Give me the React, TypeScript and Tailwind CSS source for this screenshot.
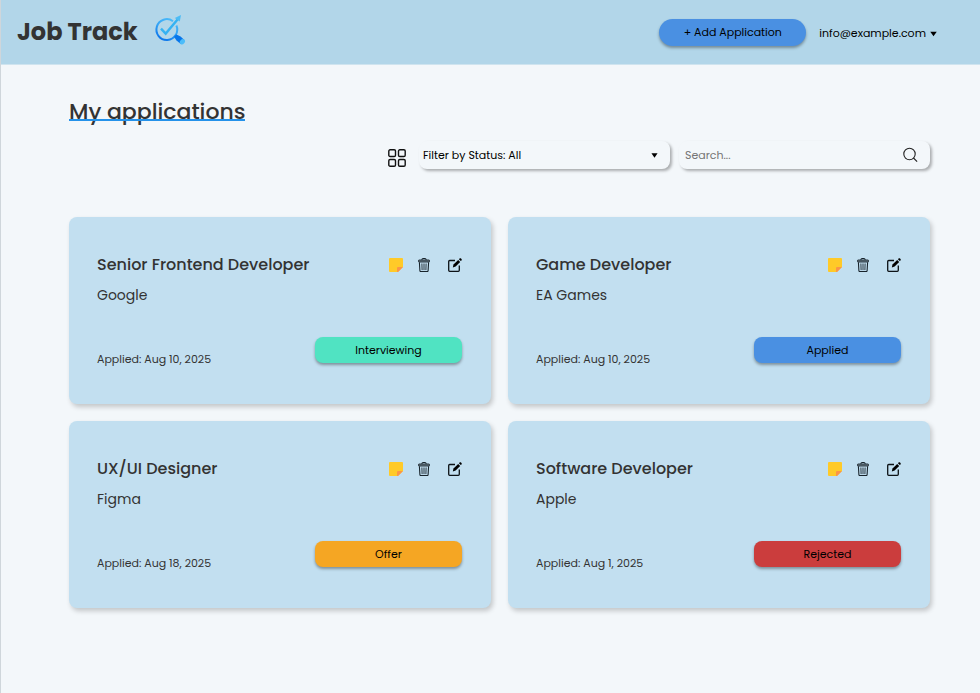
import React, { useState } from "react";

type Status = "Interviewing" | "Applied" | "Offer" | "Rejected";

interface Application {
  title: string;
  company: string;
  date: string;
  status: Status;
}

const applications: Application[] = [
  { title: "Senior Frontend Developer", company: "Google", date: "Aug 10, 2025", status: "Interviewing" },
  { title: "Game Developer", company: "EA Games", date: "Aug 10, 2025", status: "Applied" },
  { title: "UX/UI Designer", company: "Figma", date: "Aug 18, 2025", status: "Offer" },
  { title: "Software Developer", company: "Apple", date: "Aug 1, 2025", status: "Rejected" },
];

const statusColors: Record<Status, string> = {
  Interviewing: "bg-[#50e3c2]",
  Applied: "bg-[#4a90e2]",
  Offer: "bg-[#f5a623]",
  Rejected: "bg-[#cb3d3d]",
};

function Logo() {
  return (
    <svg viewBox="0 0 32 32" className="size-8" fill="none" aria-hidden="true">
      <defs>
        <linearGradient id="lens" x1="22" y1="4" x2="10" y2="28" gradientUnits="userSpaceOnUse">
          <stop stopColor="#4fc0fb" />
          <stop offset="0.5" stopColor="#36a5f5" />
          <stop offset="1" stopColor="#0670ea" />
        </linearGradient>
      </defs>
      <path d="M19 7.200A10.400 10.400 0 1 0 22.400 11.500" stroke="url(#lens)" strokeWidth="2" />
      <path d="m7 14.600 4.700 5L25 3.800" stroke="#35b2f2" strokeWidth="2.400" />
      <path d="m20.800 3.900 6.200-3-1.200 6.600z" fill="#4cbcf5" />
      <path d="m20 22.800 2.400-2.200 4.200 2 3.700 3.400-3.500 4-4.300-3.400z" fill="#0876ea" />
      <ellipse cx="28.400" cy="27.800" rx="2.300" ry="2.900" transform="rotate(40 28.4 27.8)" fill="#4cbdfa" />
    </svg>
  );
}

function GridIcon() {
  return (
    <svg viewBox="0 0 18 18" className="size-[18px]" fill="none" stroke="#111" strokeWidth="1.4" aria-hidden="true">
      <rect x="0.8" y="0.8" width="6.7" height="6.7" rx="1.3" />
      <rect x="10.5" y="0.8" width="6.7" height="6.7" rx="1.3" />
      <rect x="0.8" y="10.5" width="6.7" height="6.7" rx="1.3" />
      <rect x="10.5" y="10.5" width="6.7" height="6.7" rx="1.3" />
    </svg>
  );
}

function Caret({ className }: { className: string }) {
  return (
    <svg viewBox="0 0 8 6" className={className} aria-hidden="true">
      <path d="M.3.3h7.4L4 5.7z" fill="#000" />
    </svg>
  );
}

function SearchIcon() {
  return (
    <svg viewBox="0 0 16 16" className="size-4" fill="none" stroke="#222" strokeWidth="1.1" aria-hidden="true">
      <circle cx="7.500" cy="7" r="5.700" />
      <path d="m11.500 11 3.600 3.600" />
    </svg>
  );
}

function NoteIcon() {
  return (
    <svg viewBox="0 0 14 14" className="size-[14px]" aria-hidden="true">
      <path d="M1 0h12a1 1 0 0 1 1 1v8l-5 5H1a1 1 0 0 1-1-1V1a1 1 0 0 1 1-1z" fill="#ffca28" />
      <path d="M14 9H9a1 1 0 0 0-1 1v4h1z" fill="#fb9448" />
    </svg>
  );
}

function TrashIcon() {
  return (
    <svg viewBox="0 0 12 14" className="h-[14px] w-3" fill="none" stroke="#17232b" aria-hidden="true">
      <path d="M4 2V1q0-.5.5-.5h3q.5 0 .5.5v1" />
      <rect x=".5" y="2" width="11" height="2" rx=".6" fill="#71848f" strokeWidth=".9" />
      <path d="m1.400 4.200.5 8.600q0 .7.700.7h6.800q.7 0 .7-.7l.5-8.600" strokeWidth="1.100" />
      <path d="m3.900 5.500.2 6.600M6 5.500v6.600M8.100 5.500l-.2 6.600" strokeWidth=".9" />
    </svg>
  );
}

function EditIcon() {
  return (
    <svg viewBox="0 0 14 14" className="size-[14px]" fill="none" aria-hidden="true">
      <path d="M7 2.500H1.700a1 1 0 0 0-1 1v8.800a1 1 0 0 0 1 1h8.600a1 1 0 0 0 1-1V7.500" stroke="#0c1216" strokeWidth="1.300" />
      <path d="m4.800 9.400.7-3L10.200 1.900l2 2L7.600 8.600z" fill="#000" />
      <path d="m10.900 1.200.7-.7c.4-.4 1-.4 1.400 0l.5.500c.4.400.4 1 0 1.400l-.7.700z" fill="#000" />
    </svg>
  );
}

function ApplicationCard({ item }: { item: Application }) {
  return (
    <article className="rounded-lg bg-[#c2dff0] pt-9 pr-[29px] pb-10 pl-7 shadow-[2px_3px_5px_rgba(0,0,0,0.2)]">
      <div className="flex items-center justify-between">
        <h2 className="text-base leading-6 font-medium">{item.title}</h2>
        <div className="flex items-center">
          <button type="button" aria-label="Notes"><NoteIcon /></button>
          <button type="button" aria-label="Delete" className="ml-[15px]"><TrashIcon /></button>
          <button type="button" aria-label="Edit" className="ml-[18px]"><EditIcon /></button>
        </div>
      </div>
      <p className="mt-2 text-sm leading-5">{item.company}</p>
      <div className="mt-8 flex h-[27px] items-start justify-between">
        <p className="pt-3 text-[11px] leading-5">Applied: {item.date}</p>
        <button
          type="button"
          className={`h-[26px] w-[147px] rounded-lg text-[11px] text-black shadow-[0_2px_3px_rgba(0,0,0,0.35)] ${statusColors[item.status]}`}
        >
          {item.status}
        </button>
      </div>
    </article>
  );
}

export default function App() {
  const [filter, setFilter] = useState("All");
  const [query, setQuery] = useState("");
  const shown = applications.filter(
    (item) =>
      (filter === "All" || item.status === filter) &&
      item.title.toLowerCase().includes(query.toLowerCase()),
  );

  return (
    <div className="min-h-screen border-l border-[#cfd6db] bg-[#f3f7fa] font-['Poppins','Inter',sans-serif] text-[#333]">
      <header className="flex h-[65px] items-center justify-between border-b border-[#cfe4ef] bg-[#b2d6e9] pr-[43px] pl-4">
        <div className="flex items-center gap-4 pb-1">
          <span className="pt-1 text-2xl leading-8 font-bold">Job Track</span>
          <Logo />
        </div>
        <div className="flex items-center gap-[13px] text-[11px] text-black">
          <button type="button" className="h-[27px] w-[147px] rounded-full bg-[#4a90e2] shadow-[0_2px_3px_rgba(0,0,0,0.35)]">
            + Add Application
          </button>
          <button type="button" className="flex items-center gap-1 pt-[3px]">
            info@example.com
            <Caret className="h-[6px] w-[7px]" />
          </button>
        </div>
      </header>

      <main className="pt-8 pr-[50px] pb-8 pl-[68px]">
        <h1 className="relative w-fit text-[22px] leading-[30px] font-medium after:absolute after:inset-x-0 after:bottom-[6px] after:h-[2px] after:bg-[#2492ea] after:content-['']">
          My applications
        </h1>

        <div className="mt-[14px] flex items-center justify-end">
          <button type="button" aria-label="Grid view" className="mr-[13px] pt-[6px]">
            <GridIcon />
          </button>
          <div className="relative w-[251px]">
            <select
              aria-label="Filter by status"
              value={filter}
              onChange={(event) => setFilter(event.target.value)}
              className="h-7 w-full appearance-none rounded-lg bg-[#f3f7fa] px-1 text-[11px] text-black shadow-[2px_2px_3px_rgba(0,0,0,0.3)]"
            >
              <option value="All">Filter by Status: All</option>
              <option>Interviewing</option>
              <option>Applied</option>
              <option>Offer</option>
              <option>Rejected</option>
            </select>
            <Caret className="pointer-events-none absolute top-3 right-3 h-[5px] w-[7px]" />
          </div>
          <div className="ml-[9px] flex h-7 w-[251px] items-center rounded-lg bg-[#f3f7fa] pr-3 pl-[6px] shadow-[2px_2px_3px_rgba(0,0,0,0.3)]">
            <input
              type="text"
              aria-label="Search applications"
              placeholder="Search..."
              value={query}
              onChange={(event) => setQuery(event.target.value)}
              className="min-w-0 flex-1 bg-transparent text-[11px] outline-none placeholder:text-[#757575]"
            />
            <button type="button" aria-label="Search"><SearchIcon /></button>
          </div>
        </div>

        <section aria-label="Applications" className="mt-12 grid grid-cols-2 gap-[17px]">
          {shown.map((item) => (
            <ApplicationCard key={item.title} item={item} />
          ))}
        </section>
      </main>
    </div>
  );
}
